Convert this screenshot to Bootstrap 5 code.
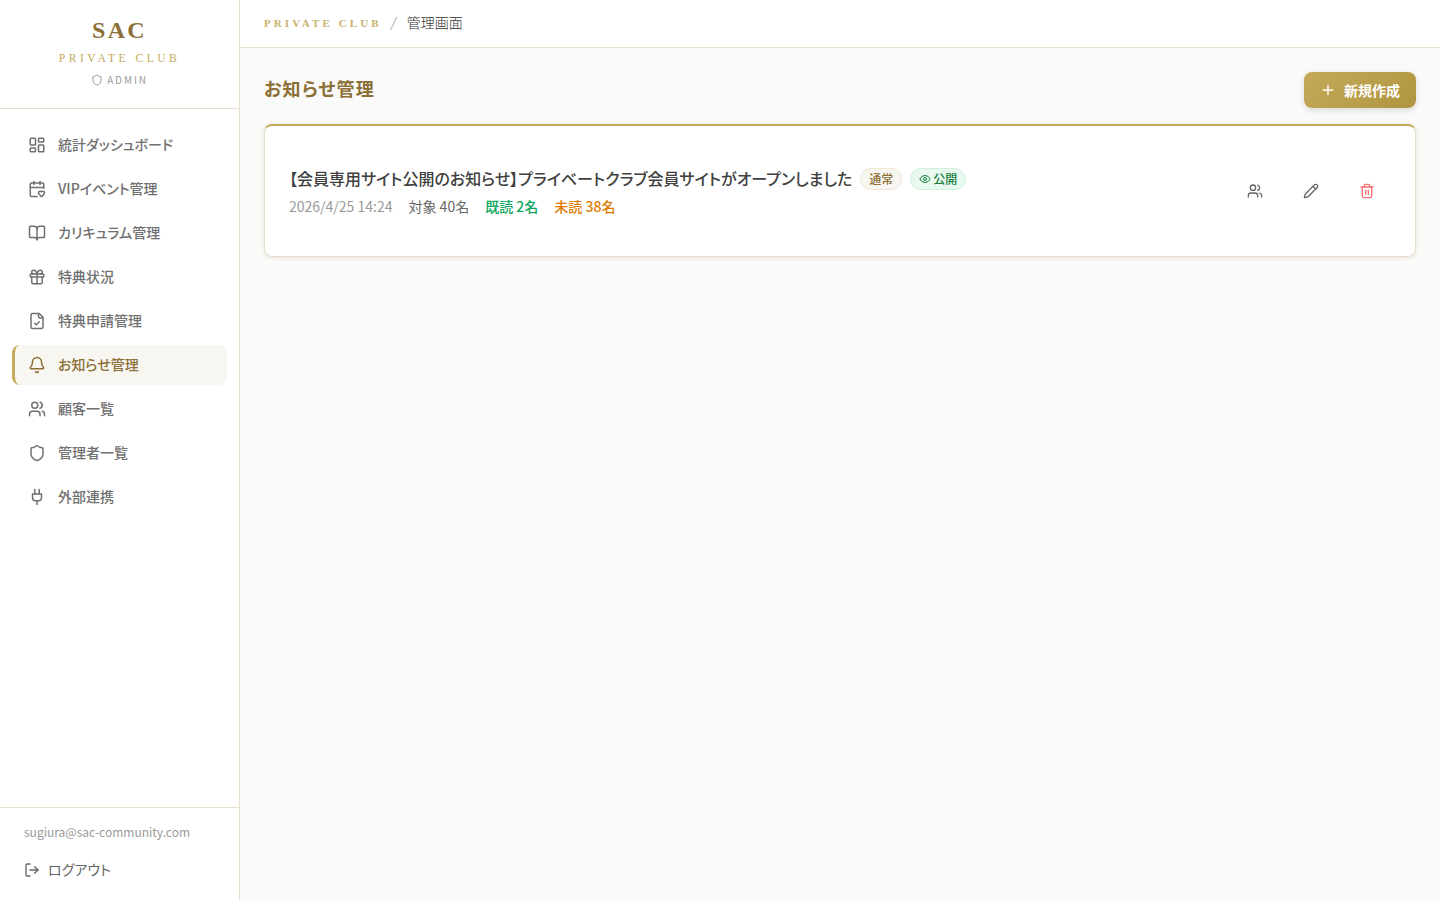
<!DOCTYPE html>
<html lang="ja">
<head>
<meta charset="utf-8">
<title>お知らせ管理</title>
<link href="https://cdn.jsdelivr.net/npm/bootstrap@5.3.0/dist/css/bootstrap.min.css" rel="stylesheet">
<style>
:root{--gold:#c4a95b;--gold-dark:#8b6f36;--line:#e8dfcf;}
html,body{height:100%;}
body{font-family:"Noto Sans CJK JP","Noto Sans",sans-serif;font-feature-settings:"palt";background:#fafaf8;color:#3d3d3d;overflow:hidden;}
svg.ico{fill:none;stroke:currentColor;stroke-width:2;stroke-linecap:round;stroke-linejoin:round;flex:none;}
.side-rail{width:240px;height:900px;background:#fff;border-right:1px solid var(--line);flex:none;}
.brand-box{height:109px;border-bottom:1px solid var(--line);padding-top:14px;}
.brand-name{font-family:"Liberation Serif",serif;font-size:24px;line-height:32px;font-weight:700;letter-spacing:2.4px;color:var(--gold-dark);}
.brand-sub{font-family:"Liberation Serif",serif;font-size:11.5px;line-height:18px;letter-spacing:3.5px;color:var(--gold);margin-top:3px;}
.brand-admin{font-size:10px;line-height:15px;letter-spacing:1.9px;color:#9a9a9a;margin-top:5px;gap:4px;}
.nav-stack{padding:16px 12px;gap:4px;}
.nav-row{height:40px;border-left:3px solid transparent;border-radius:8px;padding-left:13px;gap:12px;font-size:14px;font-weight:500;color:#707070;text-decoration:none;}
.nav-row span{margin-bottom:1px;}
.nav-row.on{background:#f8f6f0;border-left-color:var(--gold);color:var(--gold-dark);}
.rail-foot{border-top:1px solid var(--line);padding:15px 24px 0;height:93px;}
.rail-mail{font-size:12px;line-height:18px;color:#999;}
.rail-out{font-size:14px;color:#666;gap:8px;margin-top:18px;text-decoration:none;line-height:21px;}
.top-strip{height:48px;background:#fff;border-bottom:1px solid var(--line);padding:0 24px;gap:9px;}
.strip-brand{font-family:"Liberation Serif",serif;font-size:11px;font-weight:700;letter-spacing:3.1px;color:#c9b26b;}
.strip-sep{font-family:"Liberation Serif",serif;font-style:italic;color:#aaa;font-size:18px;line-height:1;}
.strip-page{font-family:"Liberation Serif","Noto Sans CJK JP",serif;font-size:14px;font-weight:300;color:#333;margin-left:2px;}
.page-body{padding:24px;}
.page-title{font-size:18px;font-weight:700;line-height:27px;letter-spacing:1.2px;color:var(--gold-dark);margin:0 0 3px;}
.make-btn{height:36px;width:112px;border:0;border-radius:8px;background:linear-gradient(135deg,#c4a95b,#b0953f);color:#fff;font-size:14px;font-weight:700;gap:8px;box-shadow:0 2px 6px rgba(0,0,0,.14);}
.notice-card{margin-top:16px;height:133px;background:#fff;border:1px solid var(--line);border-top:2px solid var(--gold);border-radius:8px;padding:0 24px;box-shadow:0 1px 4px rgba(139,111,54,.16);}
.notice-title{font-size:16px;font-weight:500;line-height:24px;color:#404040;margin:0;}
.chip-plain,.chip-live{font-size:12px;font-weight:500;line-height:16px;border-radius:999px;padding:2px 8px;border:1px solid;margin:2px 0 0 8px;}
.chip-plain{background:#f8f6f0;border-color:#efe6d3;color:var(--gold-dark);}
.chip-live{background:#e9f9ef;border-color:#cdf1db;color:#15803d;gap:2px;}
.meta-row{font-size:14px;line-height:21px;gap:16px;margin-top:6px;color:#666;}
.meta-date{color:#999;}
.meta-read{color:#10a860;font-weight:500;}
.meta-unread{color:#e07b00;font-weight:500;}
.act-btn{width:32px;height:32px;border:0;background:transparent;padding:0;color:#666;}
.act-btn.danger{color:#f87171;}
.act-set{gap:24px;margin-right:8px;}
</style>
</head>
<body>
<div class="d-flex">
<aside class="side-rail d-flex flex-column">
  <div class="brand-box text-center">
    <div class="brand-name">SAC</div>
    <div class="brand-sub">PRIVATE CLUB</div>
    <div class="brand-admin d-flex justify-content-center align-items-center">
      <svg class="ico" width="12" height="12" viewBox="0 0 24 24"><path d="M20 13c0 5-3.5 7.5-7.66 8.95a1 1 0 0 1-.67-.01C7.5 20.5 4 18 4 13V6a1 1 0 0 1 1-1c2 0 4.5-1.2 6.24-2.72a1.17 1.17 0 0 1 1.52 0C14.51 3.81 17 5 19 5a1 1 0 0 1 1 1z"/></svg>
      <span>ADMIN</span>
    </div>
  </div>
  <nav class="nav-stack d-flex flex-column flex-grow-1">
    <a class="nav-row d-flex align-items-center" href="#"><svg class="ico" width="18" height="18" viewBox="0 0 24 24"><rect x="3" y="3" width="7" height="9" rx="1"/><rect x="14" y="3" width="7" height="5" rx="1"/><rect x="14" y="12" width="7" height="9" rx="1"/><rect x="3" y="16" width="7" height="5" rx="1"/></svg><span>統計ダッシュボード</span></a>
    <a class="nav-row d-flex align-items-center" href="#"><svg class="ico" width="18" height="18" viewBox="0 0 24 24"><path d="M12.127 22H5a2 2 0 0 1-2-2V6a2 2 0 0 1 2-2h14a2 2 0 0 1 2 2v5.125"/><path d="M14.62 18.8A2.25 2.25 0 1 1 18 15.836a2.25 2.25 0 1 1 3.38 2.966l-2.626 2.856a.998.998 0 0 1-1.507 0z"/><path d="M16 2v4"/><path d="M3 10h18"/><path d="M8 2v4"/></svg><span>VIPイベント管理</span></a>
    <a class="nav-row d-flex align-items-center" href="#"><svg class="ico" width="18" height="18" viewBox="0 0 24 24"><path d="M12 7v14"/><path d="M3 18a1 1 0 0 1-1-1V4a1 1 0 0 1 1-1h5a4 4 0 0 1 4 4 4 4 0 0 1 4-4h5a1 1 0 0 1 1 1v13a1 1 0 0 1-1 1h-6a3 3 0 0 0-3 3 3 3 0 0 0-3-3z"/></svg><span>カリキュラム管理</span></a>
    <a class="nav-row d-flex align-items-center" href="#"><svg class="ico" width="18" height="18" viewBox="0 0 24 24"><rect x="3" y="8" width="18" height="4" rx="1"/><path d="M12 8v13"/><path d="M19 12v7a2 2 0 0 1-2 2H7a2 2 0 0 1-2-2v-7"/><path d="M7.5 8a2.5 2.5 0 0 1 0-5A4.8 8 0 0 1 12 8a4.8 8 0 0 1 4.5-5 2.5 2.5 0 0 1 0 5"/></svg><span>特典状況</span></a>
    <a class="nav-row d-flex align-items-center" href="#"><svg class="ico" width="18" height="18" viewBox="0 0 24 24"><path d="M15 2H6a2 2 0 0 0-2 2v16a2 2 0 0 0 2 2h12a2 2 0 0 0 2-2V7Z"/><path d="M14 2v4a2 2 0 0 0 2 2h4"/><path d="m9 15 2 2 4-4"/></svg><span>特典申請管理</span></a>
    <a class="nav-row on d-flex align-items-center" href="#"><svg class="ico" width="18" height="18" viewBox="0 0 24 24"><path d="M10.268 21a2 2 0 0 0 3.464 0"/><path d="M3.262 15.326A1 1 0 0 0 4 17h16a1 1 0 0 0 .74-1.673C19.41 13.956 18 12.499 18 8A6 6 0 0 0 6 8c0 4.499-1.411 5.956-2.738 7.326"/></svg><span>お知らせ管理</span></a>
    <a class="nav-row d-flex align-items-center" href="#"><svg class="ico" width="18" height="18" viewBox="0 0 24 24"><path d="M16 21v-2a4 4 0 0 0-4-4H6a4 4 0 0 0-4 4v2"/><circle cx="9" cy="7" r="4"/><path d="M22 21v-2a4 4 0 0 0-3-3.87"/><path d="M16 3.13a4 4 0 0 1 0 7.75"/></svg><span>顧客一覧</span></a>
    <a class="nav-row d-flex align-items-center" href="#"><svg class="ico" width="18" height="18" viewBox="0 0 24 24"><path d="M20 13c0 5-3.5 7.5-7.66 8.95a1 1 0 0 1-.67-.01C7.5 20.5 4 18 4 13V6a1 1 0 0 1 1-1c2 0 4.5-1.2 6.24-2.72a1.17 1.17 0 0 1 1.52 0C14.51 3.81 17 5 19 5a1 1 0 0 1 1 1z"/></svg><span>管理者一覧</span></a>
    <a class="nav-row d-flex align-items-center" href="#"><svg class="ico" width="18" height="18" viewBox="0 0 24 24"><path d="M12 22v-5"/><path d="M9 8V2"/><path d="M15 8V2"/><path d="M18 8v5a4 4 0 0 1-4 4h-4a4 4 0 0 1-4-4V8Z"/></svg><span>外部連携</span></a>
  </nav>
  <div class="rail-foot">
    <div class="rail-mail">sugiura@sac-community.com</div>
    <a class="rail-out d-flex align-items-center" href="#"><svg class="ico" width="16" height="16" viewBox="0 0 24 24"><path d="M9 21H5a2 2 0 0 1-2-2V5a2 2 0 0 1 2-2h4"/><path d="m16 17 5-5-5-5"/><path d="M21 12H9"/></svg>ログアウト</a>
  </div>
</aside>
<main class="flex-grow-1">
  <div class="top-strip d-flex align-items-center">
    <span class="strip-brand">PRIVATE CLUB</span>
    <span class="strip-sep">/</span>
    <span class="strip-page">管理画面</span>
  </div>
  <div class="page-body">
    <div class="d-flex justify-content-between align-items-center">
      <h1 class="page-title">お知らせ管理</h1>
      <button class="make-btn d-flex align-items-center justify-content-center" type="button"><svg class="ico" width="16" height="16" viewBox="0 0 24 24"><path d="M5 12h14"/><path d="M12 5v14"/></svg>新規作成</button>
    </div>
    <div class="notice-card d-flex align-items-center justify-content-between">
      <div>
        <div class="d-flex align-items-center">
          <h2 class="notice-title">【会員専用サイト公開のお知らせ】プライベートクラブ会員サイトがオープンしました</h2>
          <span class="chip-plain">通常</span>
          <span class="chip-live d-inline-flex align-items-center"><svg class="ico" width="12" height="12" viewBox="0 0 24 24"><path d="M2.062 12.348a1 1 0 0 1 0-.696 10.75 10.75 0 0 1 19.876 0 1 1 0 0 1 0 .696 10.75 10.75 0 0 1-19.876 0"/><circle cx="12" cy="12" r="3"/></svg>公開</span>
        </div>
        <div class="meta-row d-flex">
          <span class="meta-date">2026/4/25 14:24</span>
          <span>対象 40名</span>
          <span class="meta-read">既読 2名</span>
          <span class="meta-unread">未読 38名</span>
        </div>
      </div>
      <div class="act-set d-flex">
        <button class="act-btn d-flex align-items-center justify-content-center" type="button" aria-label="対象者"><svg class="ico" width="16" height="16" viewBox="0 0 24 24"><path d="M16 21v-2a4 4 0 0 0-4-4H6a4 4 0 0 0-4 4v2"/><circle cx="9" cy="7" r="4"/><path d="M22 21v-2a4 4 0 0 0-3-3.87"/><path d="M16 3.13a4 4 0 0 1 0 7.75"/></svg></button>
        <button class="act-btn d-flex align-items-center justify-content-center" type="button" aria-label="編集"><svg class="ico" width="16" height="16" viewBox="0 0 24 24"><path d="M21.174 6.812a1 1 0 0 0-3.986-3.987L3.842 16.174a2 2 0 0 0-.5.83l-1.321 4.352a.5.5 0 0 0 .623.622l4.353-1.32a2 2 0 0 0 .83-.497z"/><path d="m15 5 4 4"/></svg></button>
        <button class="act-btn danger d-flex align-items-center justify-content-center" type="button" aria-label="削除"><svg class="ico" width="16" height="16" viewBox="0 0 24 24"><path d="M3 6h18"/><path d="M19 6v14c0 1-1 2-2 2H7c-1 0-2-1-2-2V6"/><path d="M8 6V4c0-1 1-2 2-2h4c1 0 2 1 2 2v2"/><path d="M10 11v6"/><path d="M14 11v6"/></svg></button>
      </div>
    </div>
  </div>
</main>
</div>
</body>
</html>
